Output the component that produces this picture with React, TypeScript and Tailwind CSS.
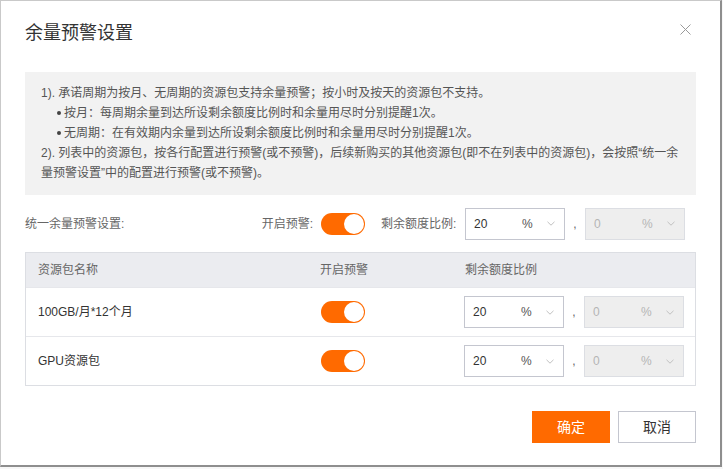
import { useState } from 'react'

const FONT = "font-['Liberation_Sans','Noto_Sans_CJK_SC',sans-serif]"

interface PackageRow {
  id: string
  name: string
  enabled: boolean
  ratio: string
}

const ROWS: PackageRow[] = [
  { id: 'p1', name: '100GB/月*12个月', enabled: true, ratio: '20' },
  { id: 'p2', name: 'GPU资源包', enabled: true, ratio: '20' },
]

function Chevron() {
  return (
    <svg width="8" height="5" viewBox="0 0 8 5" className="shrink-0" aria-hidden>
      <path d="M0.5 0.8L4 4.2L7.5 0.8" fill="none" stroke="#c0c0c0" strokeWidth="1" />
    </svg>
  )
}

function PercentSelect({ value, disabled }: { value: string; disabled?: boolean }) {
  return (
    <div
      className={
        disabled
          ? 'flex items-center w-[100px] h-[32px] border border-[#dcdee3] bg-[#eeeeee] text-[12px] text-[#b5b5b5]'
          : 'flex items-center w-[100px] h-[32px] border border-[#c4c6cf] bg-white text-[12px] text-[#333]'
      }
    >
      <span className="w-[56px] pl-[8px] leading-none">{value}</span>
      <span className={disabled ? 'w-[25px] leading-none text-[#b5b5b5]' : 'w-[25px] leading-none text-[#555]'}>%</span>
      <Chevron />
    </div>
  )
}

function RatioPair({ value }: { value: string }) {
  return (
    <div className="flex items-center">
      <PercentSelect value={value} />
      <span className="w-[20px] text-center text-[12px] text-[#666] leading-none">,</span>
      <PercentSelect value="0" disabled />
    </div>
  )
}

function Toggle({ on, onClick }: { on: boolean; onClick: () => void }) {
  return (
    <button
      onClick={onClick}
      className={
        on
          ? 'flex items-center justify-end w-[44px] h-[22px] rounded-full bg-[#ff6a00] p-[1px]'
          : 'flex items-center justify-start w-[44px] h-[22px] rounded-full bg-[#dcdee3] p-[1px]'
      }
      aria-pressed={on}
    >
      <span className="block w-[20px] h-[20px] rounded-full bg-white" />
    </button>
  )
}

export default function App() {
  const [unified, setUnified] = useState(true)
  const [rows, setRows] = useState(ROWS)

  function toggleRow(id: string) {
    setRows((rs) => rs.map((r) => (r.id === id ? { ...r, enabled: !r.enabled } : r)))
  }

  return (
    <div className={`w-[723px] h-[469px] bg-[#f7f7f7] ${FONT}`}>
      <div className="flex flex-col w-[722px] h-[467px] bg-white px-6 border-l border-t border-[#c9c9c9] border-r-2 border-b-2 border-r-[#8e8e8e] border-b-[#8e8e8e]">
        {/* header */}
        <div className="flex items-start justify-between h-[71px] pt-[20px]">
          <h2 className="text-[18px] leading-[24px] text-[#333] font-normal">余量预警设置</h2>
          <button className="mt-[3px] mr-[5px]" aria-label="关闭">
            <svg width="11" height="11" viewBox="0 0 11 11" aria-hidden>
              <path d="M0.5 0.5L10.5 10.5M10.5 0.5L0.5 10.5" stroke="#9a9a9a" strokeWidth="1" />
            </svg>
          </button>
        </div>

        {/* notice */}
        <div className="bg-[#f2f2f2] px-4 pt-[11px] pb-[12px] text-[12px] leading-[20px] text-[#555]">
          <p>1). 承诺周期为按月、无周期的资源包支持余量预警；按小时及按天的资源包不支持。</p>
          <p className="flex items-center pl-[16px]">
            <span className="w-[4px] h-[4px] rounded-full bg-[#444] mr-[3px]" />
            按月：每周期余量到达所设剩余额度比例时和余量用尽时分别提醒1次。
          </p>
          <p className="flex items-center pl-[16px]">
            <span className="w-[4px] h-[4px] rounded-full bg-[#444] mr-[3px]" />
            无周期：在有效期内余量到达所设剩余额度比例时和余量用尽时分别提醒1次。
          </p>
          <p>
            2). 列表中的资源包，按各行配置进行预警(或不预警)，后续新购买的其他资源包(即不在列表中的资源包)，会按照“统一余
            <br />
            量预警设置”中的配置进行预警(或不预警)。
          </p>
        </div>

        {/* unified setting */}
        <div className="flex items-center mt-[13px] h-[31px] text-[12px] text-[#666]">
          <div className="flex items-center justify-between w-[288px]">
            <span>统一余量预警设置:</span>
            <span>开启预警:</span>
          </div>
          <div className="ml-[8px]">
            <Toggle on={unified} onClick={() => setUnified(!unified)} />
          </div>
          <span className="ml-[16px] w-[84px]">剩余额度比例:</span>
          <RatioPair value="20" />
        </div>

        {/* table */}
        <div className="mt-[13px] border border-[#dcdee3] text-[12px]">
          <div className="grid grid-cols-[281px_144px_1fr] items-center h-[34px] bg-[#ebecf0] text-[#666]">
            <span className="pl-[12px]">资源包名称</span>
            <span className="pl-[13px]">开启预警</span>
            <span className="pl-[14px]">剩余额度比例</span>
          </div>
          {rows.map((row) => (
            <div
              key={row.id}
              className="grid grid-cols-[281px_144px_1fr] items-center h-[49px] border-t border-[#e6e7eb] text-[#333]"
            >
              <span className="pl-[12px]">{row.name}</span>
              <div className="pl-[14px]">
                <Toggle on={row.enabled} onClick={() => toggleRow(row.id)} />
              </div>
              <div className="pl-[13px]">
                <RatioPair value={row.ratio} />
              </div>
            </div>
          ))}
        </div>

        {/* footer */}
        <div className="flex justify-end gap-2 mt-[25px]">
          <button className="w-[78px] h-[32px] bg-[#ff6a00] text-white text-[14px]">确定</button>
          <button className="w-[78px] h-[32px] border border-[#c4c6cf] bg-white text-[#333] text-[14px]">取消</button>
        </div>
      </div>
    </div>
  )
}
